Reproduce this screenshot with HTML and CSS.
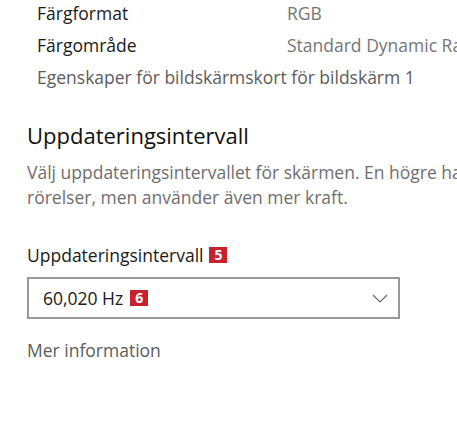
FILE: index.html
```html
<!DOCTYPE html>
<html lang="sv">
<head>
  <meta charset="UTF-8" />
  <meta name="viewport" content="width=device-width, initial-scale=1.0" />
  <title>Bildskärm - Avancerade inställningar</title>
  <link rel="stylesheet" href="styles.css">
</head>
<body>

<!-- Display info rows -->
<div class="info-list">
  <div class="info-row">
    <span class="info-label">Färgformat</span>
    <span class="info-value">RGB</span>
  </div>
  <div class="info-row">
    <span class="info-label">Färgområde</span>
    <span class="info-value">Standard Dynamic Range (SDR)</span>
  </div>
  <div class="info-row">
    <a class="info-link" href="#">Egenskaper för bildskärmskort för bildskärm 1</a>
  </div>
</div>

<!-- Refresh rate section -->
<section class="refresh">
  <h2>Uppdateringsintervall</h2>
  <p class="description">Välj uppdateringsintervallet för skärmen. En högre hastighet ger jämnare<br>rörelser, men använder även mer kraft.</p>

  <div class="field-label">Uppdateringsintervall <span class="badge">5</span></div>
  <div class="dropdown">
    <span class="dropdown-value">60,020 Hz <span class="badge">6</span></span>
    <svg class="chevron" width="16" height="9" viewBox="0 0 16 9">
      <path d="M1 1 L8 8 L15 1" fill="none" stroke="#666" stroke-width="1.2" />
    </svg>
  </div>

  <a class="more-link" href="#">Mer information</a>
</section>

</body>
</html>
```

FILE: styles.css
```css
/* =========================
   General Page Styling
   ========================= */
body {
  font-family: "Open Sans", "Noto Sans", sans-serif;
  background-color: #fff;
  color: #1a1a1a;
  margin: 0;
  padding: 0;
  overflow: hidden;
  white-space: nowrap;
}

/* =========================
   Info rows
   ========================= */
.info-list {
  padding-left: 37px;
  margin-top: -3px;
}

.info-row {
  display: flex;
  height: 32px;
  align-items: center;
  font-size: 17.5px;
}

.info-label {
  width: 250px;
  flex-shrink: 0;
  color: #1a1a1a;
}

.info-value {
  color: #767676;
}

.info-link {
  color: #5c5c5c;
  text-decoration: none;
}

/* =========================
   Refresh rate section
   ========================= */
.refresh {
  padding-left: 27px;
  margin-top: 27px;
}

.refresh h2 {
  font-weight: normal;
  font-size: 22px;
  margin: 0;
  line-height: 30px;
  color: #111;
}

.description {
  font-size: 17.5px;
  line-height: 25px;
  color: #6e6e6e;
  margin: 10px 0 0 0;
}

.field-label {
  font-size: 17.5px;
  margin-top: 34px;
  line-height: 22px;
  color: #1a1a1a;
  display: flex;
  align-items: center;
  gap: 6px;
}

.badge {
  display: inline-flex;
  align-items: center;
  justify-content: center;
  width: 18px;
  height: 16px;
  background-color: #c9202e;
  color: #fff;
  font-weight: bold;
  font-size: 14px;
  line-height: 16px;
}

/* =========================
   Dropdown
   ========================= */
.dropdown {
  margin-top: 11px;
  width: 373px;
  height: 42px;
  box-sizing: border-box;
  border: 2px solid #999;
  display: flex;
  align-items: center;
  justify-content: space-between;
  padding: 0 10px 0 14px;
}

.dropdown-value {
  font-size: 17.5px;
  display: flex;
  align-items: center;
  gap: 7px;
  color: #1a1a1a;
}

.more-link {
  display: block;
  margin-top: 19px;
  line-height: 24px;
  font-size: 17.5px;
  color: #5c5c5c;
  text-decoration: none;
}
```
